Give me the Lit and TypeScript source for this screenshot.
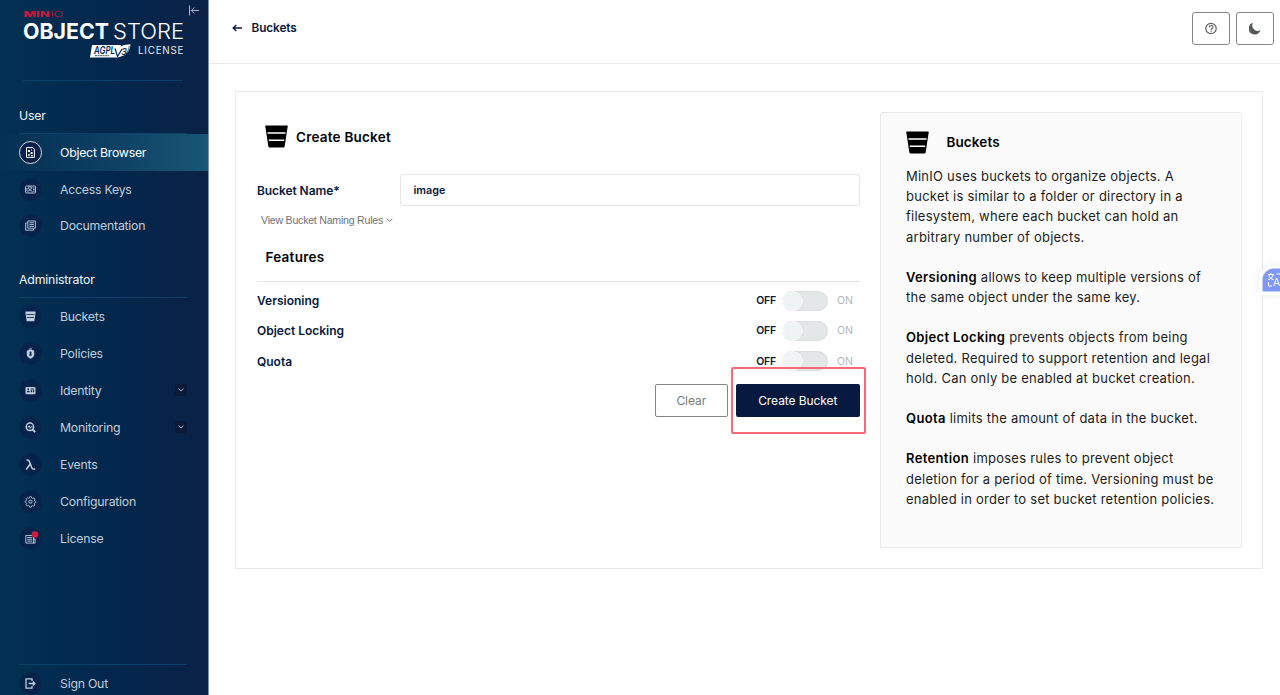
import { LitElement, html, css, svg, nothing } from "lit";
import { customElement, property } from "lit/decorators.js";
import { classMap } from "lit/directives/class-map.js";

const icons: Record<string, unknown> = {
  browser: svg`<path d="M1.5.6h6.300l1.600 1.600v8.200H1.500z" fill="none" stroke="currentColor" stroke-width="1"/><path d="M3 3h2v2H3zM5.600 5h2v2h-2zM3.200 7h1.600v1.800H3.200zM6 8h1.800v1.200H6zM6 2.400h1v1H6z" fill="currentColor"/>`,
  keys: svg`<rect x=".5" y="2" width="10" height="7" rx="1" fill="none" stroke="currentColor" stroke-width=".9"/><circle cx="5" cy="4.100" r="1.500" fill="none" stroke="currentColor" stroke-width=".9"/><path d="M2.800 8.500c0-3 4.400-3 4.400 0M7.700 4h1.900M8 5.600h1.600M8 7.200h1.600M1.900 4v3" fill="none" stroke="currentColor" stroke-width=".9"/>`,
  docs: svg`<path d="M2.800 1h7.600v7.200H2.800zM4.400 2.800h4.500M4.400 4.600h4.500M4.400 6.400h4.500M2.400 3H.7v7.200h7.800V8.600" fill="none" stroke="currentColor" stroke-width=".9"/>`,
  bucket: svg`<path d="M.5.500h10v1.800L9.300 10.300H1.700L.5 2.300z" fill="currentColor"/><path d="M1.600 3.500h7.800M2 6.500h7" stroke="#0b2248" stroke-width=".8"/>`,
  policy: svg`<path d="M5.500 1.200 9.200 2.800v3.700C9.200 8.700 7.400 9.900 5.500 10.700 3.600 9.900 1.800 8.700 1.800 6.500V2.800z" fill="currentColor"/><path d="M4.200 1.600a1.300 1.300 0 0 1 2.600 0" fill="none" stroke="currentColor" stroke-width=".7"/><circle cx="5.500" cy="4.600" r="1" fill="#0b2248"/><path d="M4.900 5h1.200l.7 2.700H4.200z" fill="#0b2248"/>`,
  identity: svg`<rect x=".5" y="1.900" width="10" height="7.400" rx="1.300" fill="currentColor"/><circle cx="3.300" cy="4.200" r=".9" fill="#0b2248"/><path d="M1.700 7.300c0-2.200 3.200-2.200 3.200 0zM5.800 3.600h3.400v.8H5.800zM5.800 5.300h1.300v2H5.800zM7.900 5.300h1.300v2H7.900z" fill="#0b2248"/>`,
  monitor: svg`<circle cx="4.900" cy="4.800" r="3.700" fill="none" stroke="currentColor" stroke-width="1.500"/><path d="m7.600 7.500 2.600 2.600" stroke="currentColor" stroke-width="1.900"/><path d="M2.500 5h1l.7-1.300 1 2.600L6 4.800h1.300" fill="none" stroke="currentColor" stroke-width="1"/>`,
  lambda: svg`<path d="M1.500 1h1.200c.9 0 1.200.4 1.600 1.400l2.500 6.300c.4 1 .8 1.300 1.500 1.300h1.900M5.300 4.700 1.300 10.500" fill="none" stroke="currentColor" stroke-width="1.500"/>`,
  gear: svg`<path d="m4.700.7h1.600l.4 1.300 1 .4 1.200-.6 1.100 1.100-.6 1.200.4 1 1.100.4v.9l-1.200.5-.4 1 .6 1.200-1.100 1.100-1.200-.6-1 .4-.3 1.200H4.700L4.300 9.800l-1-.4-1.200.6L1 8.900l.6-1.200-.4-1L.2 6.200v-1l1-.4.4-1L1 2.800l1.100-1.100 1.200.6 1-.4z" fill="none" stroke="currentColor" stroke-width=".8"/><circle cx="5.500" cy="5.700" r="1.600" fill="none" stroke="currentColor" stroke-width="1"/>`,
  license: svg`<path d="M.8 2.500h7.700v7.600H.8zM2.300 4.500h4.800M2.300 6.300h4.800M2.300 8.100h4.800M8.500 6h1.600v4.100H8" fill="none" stroke="currentColor" stroke-width=".9"/><circle cx="10" cy="1.500" r="3.300" fill="#d01c40"/>`,
  signout: svg`<path d="M7 3V.9H1v9.200h6V8M3.600 5.500h6.200M7.800 3.500l2.100 2-2.100 2" fill="none" stroke="currentColor" stroke-width="1.300"/>`,
};

@customElement("nav-item")
export class NavItem extends LitElement {
  @property() label = "";
  @property() icon = "";
  @property({ type: Boolean }) active = false;
  @property({ type: Boolean }) expandable = false;

  static styles = css`
    :host { display: block; height: 37px; flex: none; }
    .row { height: 100%; display: flex; align-items: center; padding: 0 21px 0 19px; color: #c0cedc; font-size: 12.300px; letter-spacing: -.24px; box-sizing: border-box; }
    .row.active { color: #fff; background: linear-gradient(90deg, rgba(24, 93, 124, 0) 0%, rgba(24, 93, 124, .9) 100%); }
    .disc { width: 23px; height: 23px; box-sizing: border-box; border-radius: 50%; background: #06244b; border: 1px solid #07264a; display: flex; align-items: center; justify-content: center; margin-right: 18px; }
    .active .disc { border-color: #d3dde5; background: #08204a; }
    .glyph { width: 11px; height: 11px; overflow: visible; }
    .label { flex: 1; white-space: nowrap; }
    .toggle { width: 12px; height: 12px; background: #0a1b3a; border-radius: 2px; display: flex; align-items: center; justify-content: center; }
    .arrow { width: 6px; height: 4px; }
  `;

  render() {
    return html`<div class=${classMap({ row: true, active: this.active })}>
      <span class="disc"><svg class="glyph" viewBox="0 0 11 11">${icons[this.icon]}</svg></span>
      <span class="label">${this.label}</span>
      ${this.expandable
        ? html`<span class="toggle"><svg class="arrow" viewBox="0 0 6 4"><path d="m.5.5 2.500 2.500L5.500.500" fill="none" stroke="#b9c9d9" stroke-width=".9"/></svg></span>`
        : nothing}
    </div>`;
  }
}

@customElement("feature-switch")
export class FeatureSwitch extends LitElement {
  @property() label = "";

  static styles = css`
    :host { display: flex; align-items: center; height: 30.200px; color: #07193e; }
    .label { flex: 1; font-weight: 600; font-size: 12px; letter-spacing: 0; }
    .off { font-weight: 600; font-size: 10.500px; letter-spacing: -.2px; margin-right: 7px; }
    .on { font-size: 10.500px; color: #b5b8bb; width: 16px; margin: 0 6.500px 0 9px; }
    .track { width: 45px; height: 20px; box-sizing: border-box; border-radius: 10px; background: #e4e7e8; box-shadow: inset 0 0 2px rgba(0, 0, 0, .12); }
    .thumb { display: block; width: 18px; height: 18px; border-radius: 50%; background: #eff3f4; border: 1px solid #fcfdfd; box-shadow: 0 0 1px rgba(0, 0, 0, .18); }
  `;

  render() {
    return html`<span class="label">${this.label}</span><span class="off">OFF</span>
      <span class="track"><span class="thumb"></span></span><span class="on">ON</span>`;
  }
}

const bucketMark = html`<svg class="bucket" viewBox="0 0 24 24"><path d="M1 .5h22q.8 0 .7.800L20.500 22.500q-.2 1-1.300 1H4.800q-1.100 0-1.300-1L.300 1.300Q.200.500 1 .500z" fill="#000"/><path d="M2.600 8.300h18.800M4 16h16" stroke="#fff" stroke-width="1.600"/></svg>`;

@customElement("app-root")
export class AppRoot extends LitElement {
  static styles = css`
    :host { display: flex; height: 695px; overflow: hidden; position: relative; background: #fff; font-family: Inter, sans-serif; color: #000; }
    .sidebar { width: 209px; box-sizing: border-box; border-right: 1px solid #8090a5; background: linear-gradient(90deg, #033152 0%, #02274d 50%, #0b2146 100%); display: flex; flex-direction: column; flex: none; position: relative; }
    .brand { height: 80px; margin: 0 25px 0 23px; border-bottom: 1px solid #0b4069; box-sizing: content-box; }
    .logo { display: block; width: 162px; height: 62px; overflow: visible; }
    .collapse { position: absolute; left: 188px; top: 5px; width: 12px; height: 11px; }
    .group { height: 53px; flex: none; box-sizing: border-box; margin: 0 21px 0 19px; border-bottom: 1px solid #0b4069; color: #f3f6f8; font-size: 12.300px; letter-spacing: -.18px; line-height: 16px; padding-top: 26.600px; }
    .group.admin { height: 53.600px; padding-top: 27.200px; }
    .upper { height: 36.800px; }
    .spacer { flex: 1; }
    .rule { height: 1px; flex: none; background: #0b4069; margin: 0 21px 0 19px; }
    .foot { height: 36.200px; margin-bottom: -6.200px; }
    .main { flex: 1; min-width: 0; }
    .header { height: 64px; box-sizing: border-box; border-bottom: 1px solid #ebebeb; display: flex; align-items: flex-start; padding: 12px 6px 0 23px; }
    .back { flex: 1; display: flex; align-items: center; height: 32px; font-size: 11.800px; letter-spacing: -.1px; font-weight: 600; color: #07193e; gap: 9.500px; }
    .back-icon { width: 10px; height: 8px; }
    .tools { display: flex; gap: 6px; }
    .tool { width: 38px; height: 33px; box-sizing: border-box; border: 1px solid #848687; border-radius: 3px; display: flex; align-items: center; justify-content: center; }
    .tool-icon { width: 13px; height: 13px; }
    .card { margin: 27px 17px 0 26px; height: 478px; box-sizing: border-box; border: 1px solid #eaeaea; display: flex; padding: 20px 20px 20px 21px; }
    .form { width: 602.500px; margin-right: 20.500px; flex: none; }
    .title { display: flex; align-items: center; height: 26px; margin: 11px 0 0 8px; gap: 8px; font-weight: 600; font-size: 13.500px; letter-spacing: .22px; }
    .title-text { padding-top: 1px; }
    .bucket { width: 23px; height: 23px; }
    .field { display: flex; align-items: center; height: 32px; margin-top: 25px; }
    .name { width: 143px; font-weight: 600; font-size: 12px; letter-spacing: -.08px; color: #07193e; }
    .input { flex: 1; height: 32px; box-sizing: border-box; border: 1px solid #e4e6e7; border-radius: 3px; padding: 0 12.500px; font-size: 10.800px; font-weight: 600; color: #07193e; line-height: 31px; }
    .rules { display: flex; align-items: center; gap: 3px; height: 16px; margin: 6px 0 0 4px; font: 10.600px "Liberation Sans", sans-serif; letter-spacing: -.23px; color: #6f7275; }
    .rules-arrow { width: 7px; height: 5px; }
    .features { height: 52px; box-sizing: border-box; border-bottom: 1px solid #e5e5e5; margin-top: 2px; padding: 17px 0 0 8.500px; font-size: 13.500px; line-height: 20px; font-weight: 600; letter-spacing: .25px; margin-bottom: 3.700px; }
    .actions { display: flex; justify-content: flex-end; gap: 8px; margin-top: 7.700px; }
    .btn { height: 33px; box-sizing: border-box; border-radius: 2px; display: flex; align-items: center; justify-content: center; font-size: 12px; letter-spacing: -.08px; }
    .clear { width: 73.500px; border: 1px solid #848687; color: #767a7c; }
    .create { width: 123.500px; background: #07193e; color: #fff; }
    .help { flex: 1; box-sizing: border-box; border: 1px solid #eaeaea; border-radius: 2px; background: #fbfbfb; padding: 17px 20px 0 25px; color: #1c1c1c; font-size: 13px; line-height: 20.170px; }
    .help-title { display: flex; align-items: center; gap: 17.500px; height: 25px; margin-bottom: 11px; font-weight: 600; font-size: 13.500px; letter-spacing: .1px; color: #000; }
    .line { white-space: nowrap; letter-spacing: .24px; }
    .para { margin: 0 0 20.170px; }
    .strong { font-weight: 600; color: #000; letter-spacing: .35px; }
    .highlight { position: absolute; left: 731px; top: 367px; width: 135px; height: 67px; box-sizing: border-box; border: 2px solid #f9586a; border-radius: 2px; opacity: .9; }
    .translate { position: absolute; left: 1259px; top: 266px; width: 24px; height: 29px; overflow: visible; filter: drop-shadow(0 0 4px rgba(0, 0, 0, .08)); }
  `;

  private help: [string, string[]][] = [
    ["", ["MinIO uses buckets to organize objects. A", "bucket is similar to a folder or directory in a", "filesystem, where each bucket can hold an", "arbitrary number of objects."]],
    ["Versioning", [" allows to keep multiple versions of", "the same object under the same key."]],
    ["Object Locking", [" prevents objects from being", "deleted. Required to support retention and legal", "hold. Can only be enabled at bucket creation."]],
    ["Quota", [" limits the amount of data in the bucket."]],
    ["Retention", [" imposes rules to prevent object", "deletion for a period of time. Versioning must be", "enabled in order to set bucket retention policies."]],
  ];

  render() {
    return html`
      <div class="sidebar">
        <div class="brand">
          <svg class="logo" viewBox="0 0 162 62" font-family="Inter, sans-serif">
            <text transform="translate(.5 17) scale(1.350 1)" font-size="8.200" font-weight="800" fill="#c9193d" textLength="19.500" lengthAdjust="spacingAndGlyphs">MIN</text>
            <text transform="translate(27.500 17) scale(1.350 1)" font-size="8.200" font-weight="300" fill="#c9193d" textLength="9.300" lengthAdjust="spacingAndGlyphs">IO</text>
            <text x="0" y="39" font-size="21.500" font-weight="700" fill="#fff" textLength="86" lengthAdjust="spacingAndGlyphs">OBJECT</text>
            <text x="90" y="39" font-size="21.500" font-weight="300" fill="#fff" textLength="71" lengthAdjust="spacingAndGlyphs">STORE</text>
            <path d="M69 45h29l-3 12.500H67z" fill="#fff"/>
            <path d="M92 50c3-3 9-5.500 15.500-5.700-.5 6.500-4 12-13.500 13.200z" fill="#fff"/>
            <text x="71" y="53.500" font-size="10" font-weight="600" font-style="italic" fill="#062a50" textLength="21" lengthAdjust="spacingAndGlyphs">AGPL</text>
            <path d="M72 55.700h14" stroke="#062a50" stroke-width=".8" stroke-dasharray="2 .5"/>
            <path d="M92 48.500l2.500 8L99 49" fill="none" stroke="#062a50" stroke-width="1.200"/>
            <text x="98" y="54.500" font-size="9.500" font-weight="500" font-style="italic" fill="#062a50">3</text>
            <path d="M102.500 54c2-1.500 3.300-4.500 3.800-8" fill="none" stroke="#062a50" stroke-width=".7"/>
            <text x="115" y="54" font-size="9.800" font-weight="400" fill="#e8edf1" textLength="45.500" lengthAdjust="spacing">LICENSE</text>
          </svg>
        </div>
        <svg class="collapse" viewBox="0 0 12 11"><path d="M1.500.5v10M11 5.500H3.500M6.300 2.500l-3 3 3 3" fill="none" stroke="#a9b7c6" stroke-width="1"/></svg>
        <div class="group">User</div>
        <nav-item class="upper" icon="browser" label="Object Browser" active></nav-item>
        <nav-item class="upper" icon="keys" label="Access Keys"></nav-item>
        <nav-item class="upper" icon="docs" label="Documentation"></nav-item>
        <div class="group admin">Administrator</div>
        <nav-item icon="bucket" label="Buckets"></nav-item>
        <nav-item icon="policy" label="Policies"></nav-item>
        <nav-item icon="identity" label="Identity" expandable></nav-item>
        <nav-item icon="monitor" label="Monitoring" expandable></nav-item>
        <nav-item icon="lambda" label="Events"></nav-item>
        <nav-item icon="gear" label="Configuration"></nav-item>
        <nav-item icon="license" label="License"></nav-item>
        <div class="spacer"></div>
        <div class="rule"></div>
        <nav-item class="foot" icon="signout" label="Sign Out"></nav-item>
      </div>
      <div class="main">
        <div class="header">
          <div class="back">
            <svg class="back-icon" viewBox="0 0 10 8"><path d="M10 4H1.500M4.300 1 1.200 4l3.100 3" fill="none" stroke="#07193e" stroke-width="1.400"/></svg>
            <span>Buckets</span>
          </div>
          <div class="tools">
            <span class="tool"><svg class="tool-icon" viewBox="0 0 13 13"><circle cx="6" cy="6.500" r="5.200" fill="none" stroke="#5e6061" stroke-width="1.200"/><path d="M4.300 5.200c0-2.300 3.700-2.200 3.700 0 0 1.300-1.800 1.300-1.800 2.600M6.200 8.600v1.200" fill="none" stroke="#5e6061" stroke-width="1.200"/></svg></span>
            <span class="tool"><svg class="tool-icon" viewBox="0 0 13 13"><path d="M4.200.8A5.900 5.900 0 1 0 11.400 8 5.200 5.200 0 0 1 4.200.8z" fill="#555859"/></svg></span>
          </div>
        </div>
        <div class="card">
          <div class="form">
            <div class="title">${bucketMark}<span class="title-text">Create Bucket</span></div>
            <div class="field"><span class="name">Bucket Name*</span><div class="input">image</div></div>
            <div class="rules"><span>View Bucket Naming Rules</span><svg class="rules-arrow" viewBox="0 0 7 5"><path d="m.7.800 2.800 2.800L6.300.800" fill="none" stroke="#6f7275" stroke-width="1"/></svg></div>
            <div class="features">Features</div>
            <feature-switch label="Versioning"></feature-switch>
            <feature-switch label="Object Locking"></feature-switch>
            <feature-switch label="Quota"></feature-switch>
            <div class="actions"><div class="btn clear">Clear</div><div class="btn create">Create Bucket</div></div>
          </div>
          <div class="help">
            <div class="help-title">${bucketMark}<span>Buckets</span></div>
            ${this.help.map(([head, lines]) => html`<div class="para">${lines.map((text, i) => html`<div class="line">${i === 0 && head ? html`<span class="strong">${head}</span>` : nothing}${text}</div>`)}</div>`)}
          </div>
        </div>
      </div>
      <div class="highlight"></div>
      <svg class="translate" viewBox="0 0 24 29">
        <path d="M0 29V12A12 12 0 0 1 12 0h12v29z" fill="#fff"/>
        <path d="M3.500 25.500V14a11.500 11.500 0 0 1 11.500-11.500h9v23z" fill="#8199f5"/>
        <path d="M9 8.500h6M12 7v1.500M10 9c.5 2.500 2 3.800 4.500 4.700M14 9c-.5 2.500-2 3.800-5 4.700M9.500 16v4h3.500M17.500 8h4v4" fill="none" stroke="#fff" stroke-width="1"/>
        <text x="14" y="20" font-family="Inter, sans-serif" font-size="10.500" fill="#fff">A</text>
      </svg>
    `;
  }
}
